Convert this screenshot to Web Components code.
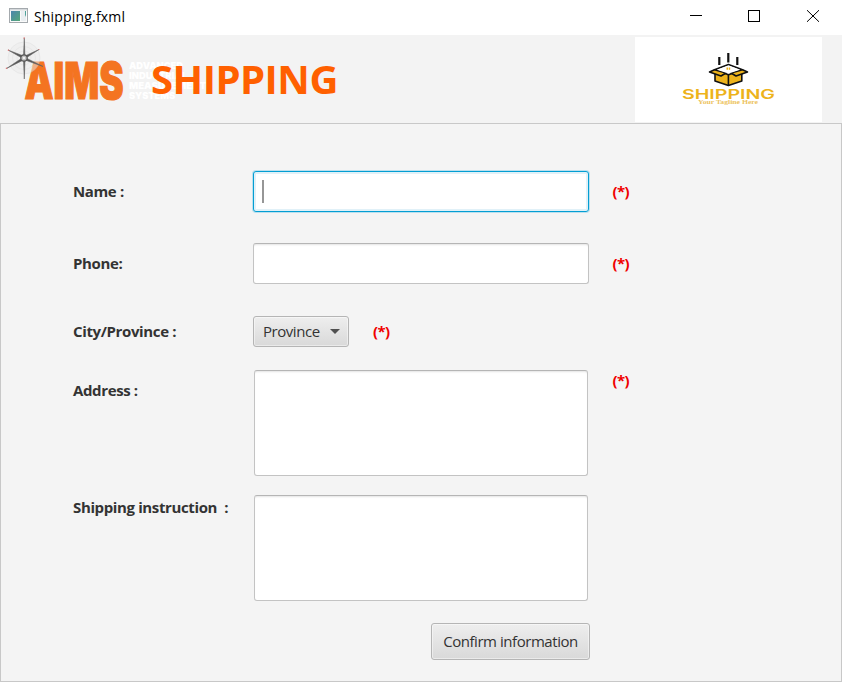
<!DOCTYPE html>
<html lang="en">
<head>
<meta charset="utf-8">
<title>Shipping.fxml</title>
<style>
html,body{margin:0;width:842px;height:682px;overflow:hidden;background:#f4f4f4}
body{font-family:"Open Sans","Noto Sans",sans-serif;font-size:15px;color:#333}
</style>
</head>
<body>
<shipping-window></shipping-window>
<script>
const define = (name, html) => {
  const t = document.createElement('template');
  t.innerHTML = html.trim();
  customElements.define(name, class extends HTMLElement {
    constructor() {
      super();
      this.attachShadow({mode: 'open'}).append(t.content.cloneNode(true));
    }
  });
};

define('window-bar', `
<style>
:host{display:flex;height:35px;background:#fff;color:#000;align-items:center}
.app{margin:-4px 0 0 9px;flex:none}
.title{margin-left:6px;font-size:14px;line-height:20px;letter-spacing:.18px;margin-top:-2px;flex:1;white-space:nowrap}
.ctl{width:152px;height:35px;flex:none}
</style>
<svg class="app" width="19" height="15" viewBox="0 0 19 15">
<defs><linearGradient id="g" x1="0" y1="0" x2="1" y2="1"><stop offset="0" stop-color="#4d85ad"/><stop offset="1" stop-color="#55a878"/></linearGradient></defs>
<rect x=".5" y=".5" width="18" height="14" fill="#fafafa" stroke="#a4a9ad"/>
<rect x="1" y="1" width="17" height="1.5" fill="#d5d9dc"/>
<rect x="2" y="3" width="9" height="10" fill="url(#g)"/>
<rect x="12" y="3" width="5" height="10" fill="#e9eef1"/>
<path d="M16 3h1v6l-1-2z" fill="#4fa39a"/>
</svg>
<span class="title"><slot></slot></span>
<svg class="ctl" viewBox="0 0 152 35" fill="none" stroke="#000">
<path d="M0 15.5h12"/><rect x="58.5" y="10.5" width="11" height="11"/><path d="M117 10.2l12 11.6M129 10.2l-12 11.6"/>
</svg>`);

define('aims-logo', `
<style>:host{display:block;width:206px;height:88px;flex:none}svg{display:block}</style>
<svg width="206" height="88" viewBox="0 35 206 88">
<g font-family="Inter,sans-serif" font-weight="900" fill="#f47421" stroke="#f47421" stroke-width="1.2" font-size="51">
<text x="0" y="0" transform="translate(24.500 98.500)" textLength="99" lengthAdjust="spacingAndGlyphs">AIMS</text></g>
<g font-family="Inter,sans-serif" font-weight="900" fill="#fff" font-size="9.6">
<text x="129" y="69" textLength="54" lengthAdjust="spacingAndGlyphs">ADVANCED</text>
<text x="129" y="79" textLength="58" lengthAdjust="spacingAndGlyphs">INDUSTRIAL</text>
<text x="129" y="89" textLength="77" lengthAdjust="spacingAndGlyphs">MEASUREMENT</text>
<text x="129" y="99" textLength="46" lengthAdjust="spacingAndGlyphs">SYSTEMS</text></g>
<g fill="none" stroke="#ccc" stroke-width=".5" opacity=".5"><circle cx="24" cy="58" r="16" fill="#ececec"/><circle cx="24" cy="58" r="11.5"/><circle cx="24" cy="58" r="7"/></g>
<path d="M24.300 38l.6 18L39 49.500 26 58l17 8.500L25 60 24.300 79l-.8-19L6.500 68.500 22 58 8 50l15.500 6z" fill="#555" stroke="#666" stroke-width=".6"/>
<circle cx="24" cy="58" r="3.200" fill="#bbb" stroke="#555" stroke-width="1.200"/><circle cx="24" cy="58" r="1.300" fill="#eee"/>
<g fill="#d77"><circle cx="24.200" cy="38" r=".8"/><circle cx="8.500" cy="50.300" r=".8"/><circle cx="39" cy="49.500" r=".6"/><circle cx="6.500" cy="68.300" r=".8"/></g>
</svg>`);

define('box-logo', `
<style>:host{display:block;width:187px;height:85px;background:#fff;flex:none}svg{display:block}</style>
<svg width="187" height="85" viewBox="635 37 187 85">
<path d="M719.300 57v8M728.300 53v9.500M737.300 57v8" stroke="#111" stroke-width="2.200"/>
<g stroke="#111" stroke-width="1.600" stroke-linejoin="round">
<path d="M715 74v7l13.400 4.500 13.400-4.500v-7l-13.400-1z" fill="#edb31b"/>
<path d="M728.400 74v11.500" fill="none"/>
<path d="M714.500 69.800l14-5.300 14 5.300-14 5z" fill="#fff"/>
<path d="M714.500 69.800l-5 2.200 11.500 4 5-3z" fill="#edb31b"/>
<path d="M742.500 69.800l5 2.200-11.500 4-5-3z" fill="#edb31b"/></g>
<path d="M717 69.800l11.500-4.400 11.500 4.400-9 3h-5z" fill="#fff"/>
<path d="M726.500 67.500h1.500v2.300h-1.500zM728.700 67.500h1.500v2.300h-1.500z" fill="#edb31b"/>
<text x="682" y="98.600" font-family="Inter,sans-serif" font-weight="600" font-size="13.400" fill="#edb31b" textLength="93" lengthAdjust="spacingAndGlyphs">SHIPPING</text>
<text x="698" y="104" font-family="Liberation Serif,serif" font-weight="700" font-size="5.200" fill="#edc360" textLength="60" lengthAdjust="spacingAndGlyphs">Your Tagline Here</text>
</svg>`);

define('page-header', `
<style>
:host{display:flex;height:88px;background:#f3f3f3;box-sizing:border-box;padding-right:20px}
h1{margin:16px 0 0 -55px;font-size:40px;line-height:56px;color:#ff6000;font-weight:700;flex:1;letter-spacing:-.5px}
box-logo{margin-top:2px}
</style>
<aims-logo></aims-logo><h1><slot></slot></h1><box-logo></box-logo>`);

define('field-label', `
<style>:host{display:block;font-weight:700;line-height:20px;letter-spacing:-.37px;white-space:nowrap}span{white-space:pre;display:block;margin-top:-1px}</style><span><slot></slot></span>`);

define('required-mark', `
<style>:host{display:block;color:#f00000;font-weight:700;line-height:20px;letter-spacing:-.6px;padding-bottom:2px}</style><slot>(*)</slot>`);

define('text-box', `
<style>
:host{display:flex;box-sizing:border-box;height:41px;background:#fff;border:1px solid #c3c3c3;border-top-color:#b5b5b5;border-radius:3px;box-shadow:inset 0 2px 2px -1px #e4e4e4;align-items:center}
:host([area]){height:106px;width:334px;margin-left:1px}
:host([focused]){border-color:#039ed3;box-shadow:0 0 0 1px #bce0ee,inset 0 0 0 2px #e1f1f8}
i{display:none;width:2px;height:23px;margin-left:8px;background:#969696}
:host([focused]) i{display:block}
</style><i></i>`);

define('push-button', `
<style>
:host{display:flex;box-sizing:border-box;height:37px;width:159px;align-items:center;justify-content:center;border:1px solid #b5b5b5;border-radius:3px;background:linear-gradient(#eee,#d9d9d9);box-shadow:inset 0 0 0 1px rgba(255,255,255,.45);line-height:20px;letter-spacing:-.45px;white-space:nowrap}
:host([menu]){height:31px;width:96px;justify-content:space-between;padding:0 8px 0 9px}
span{margin-top:-2px}
svg{display:none}:host([menu]) svg{display:block}
</style><span><slot></slot></span><svg width="10" height="5"><path d="M0 0h10L5 5z" fill="#505050"/></svg>`);

define('shipping-form', `
<style>
:host{display:grid;box-sizing:border-box;height:559px;border:1px solid #c8c8c8;padding:47px 0 0 72px;background:#f4f4f4;
grid-template-columns:180px 336px 80px;grid-template-rows:72px 73px 54px 125px 128px 37px;align-content:start}
.r{display:grid;grid-column:1/-1;grid-template-columns:180px 336px 23.5px 50px;align-items:center;align-self:start}
.r required-mark{grid-column:4}
.combo{display:flex;gap:24px;align-items:center;height:31px}
.top{align-items:start}
.actions{grid-column:1/3;justify-self:end;margin-right:-1px}
.address{margin-top:11px}
.instruction{margin-top:3px}
</style>
<div class="r"><field-label>Name :</field-label><text-box focused></text-box><required-mark></required-mark></div>
<div class="r"><field-label>Phone:</field-label><text-box></text-box><required-mark></required-mark></div>
<div class="r"><field-label>City/Province :</field-label><div class="combo"><push-button menu>Province</push-button><required-mark></required-mark></div></div>
<div class="r top"><field-label class="address">Address :</field-label><text-box area></text-box><required-mark></required-mark></div>
<div class="r top"><field-label class="instruction">Shipping instruction  :</field-label><text-box area></text-box></div>
<push-button class="actions">Confirm information</push-button>`);

define('shipping-window', `
<style>:host{display:flex;flex-direction:column;width:842px;height:682px}</style>
<window-bar>Shipping.fxml</window-bar><page-header>SHIPPING</page-header><shipping-form></shipping-form>`);
</script>
</body>
</html>
